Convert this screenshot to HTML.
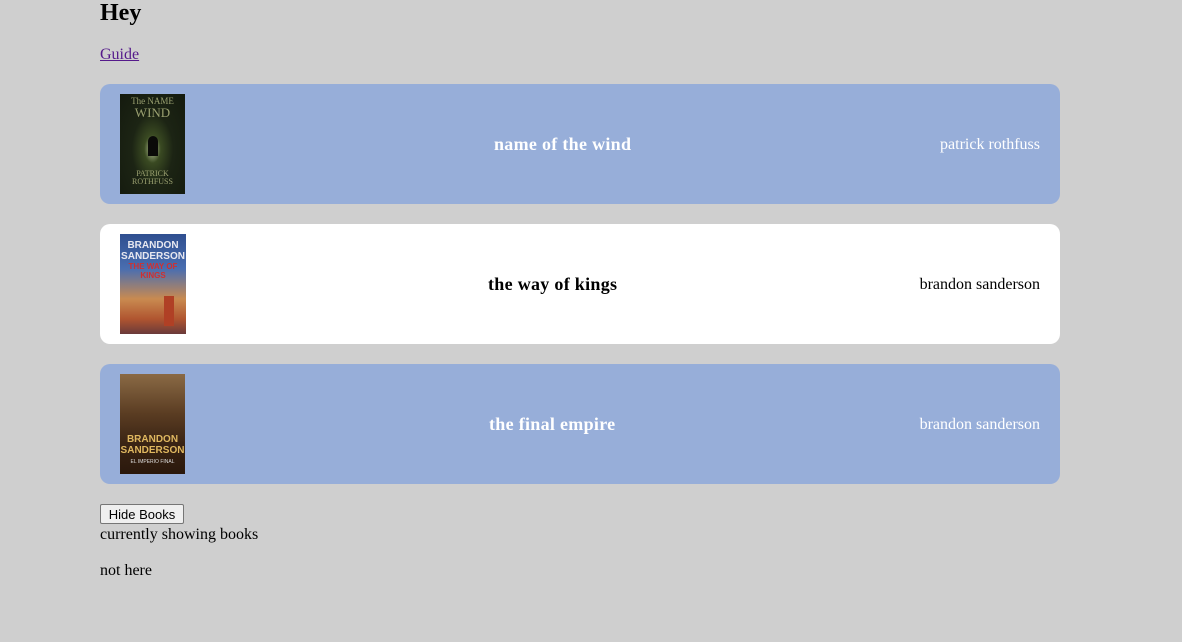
<!DOCTYPE html>
<html><head><meta charset="utf-8"><style>
html,body{margin:0;padding:0;}
body{background:#cfcfcf;width:1182px;height:642px;position:relative;overflow:hidden;font-family:"Liberation Serif",serif;color:#000;}
h2{position:absolute;left:100px;top:0;margin:0;font-size:24px;line-height:26px;font-weight:bold;}
a{position:absolute;left:100px;top:46px;font-size:16px;line-height:18px;color:#551a8b;}
.card{position:absolute;left:100px;width:960px;height:120px;border-radius:10px;background:#97aed9;color:#fff;}
.card.w{background:#fff;color:#000;}
.cov{position:absolute;left:20px;top:10px;width:65px;height:100px;overflow:hidden;font-family:"Liberation Sans",sans-serif;text-align:center;}
.t{position:absolute;top:49px;font-size:18px;font-weight:bold;line-height:22px;}
.au{position:absolute;right:20px;top:52px;font-size:16px;line-height:18px;}
button{position:absolute;left:100px;top:504px;width:84px;height:20px;padding:0;font:13px "Liberation Sans",sans-serif;background:#efefef;border:1px solid #767676;border-radius:2px;color:#000;}
.p{position:absolute;left:100px;font-size:16px;line-height:18px;}
</style></head><body>
<h2>Hey</h2>
<a href="#">Guide</a>

<div class="card" style="top:84px">
  <div class="cov" style="background:radial-gradient(ellipse at 50% 55%,#b8c49a 0,#3a4a22 18%,#1c2414 45%,#141a0e 100%);color:#9aa070;font-family:'Liberation Serif',serif;">
    <div style="font-size:9px;line-height:9px;margin-top:3px">The NAME</div>
    <div style="font-size:13px;line-height:13px">WIND</div>
    <div style="position:absolute;left:28px;top:42px;width:10px;height:20px;background:#0a0a08;border-radius:5px 5px 0 0"></div>
    <div style="position:absolute;top:76px;width:65px;font-size:8px;line-height:8px">PATRICK<br>ROTHFUSS</div>
  </div>
  <div class="t" style="left:394px;letter-spacing:0.3px">name of the wind</div>
  <div class="au">patrick rothfuss</div>
</div>

<div class="card w" style="top:224px">
  <div class="cov" style="background:linear-gradient(#2f4f90 0,#4a6eb0 35%,#c98a50 65%,#b05530 85%,#6a3a3a 100%);color:#e8e8f0;width:66px">
    <div style="font-size:10px;line-height:11px;margin-top:6px;font-weight:bold">BRANDON<br>SANDERSON</div>
    <div style="font-size:8px;line-height:9px;color:#d03030;font-weight:bold">THE WAY OF KINGS</div>
    <div style="position:absolute;left:44px;top:62px;width:10px;height:30px;background:#b04025"></div>
  </div>
  <div class="t" style="left:388px;letter-spacing:0.3px">the way of kings</div>
  <div class="au">brandon sanderson</div>
</div>

<div class="card" style="top:364px">
  <div class="cov" style="background:linear-gradient(#8a6a45 0,#5a3c22 40%,#3a2414 70%,#2a180c 100%);color:#e0b860;">
    <div style="position:absolute;top:60px;width:65px;font-size:10px;line-height:11px;font-weight:bold">BRANDON<br>SANDERSON</div>
    <div style="position:absolute;top:85px;width:65px;font-size:5px;line-height:6px;color:#ddd">EL IMPERIO FINAL</div>
  </div>
  <div class="t" style="left:389px;letter-spacing:0.3px">the final empire</div>
  <div class="au">brandon sanderson</div>
</div>

<button>Hide Books</button>
<div class="p" style="top:526px">currently showing books</div>
<div class="p" style="top:562px">not here</div>
</body></html>
